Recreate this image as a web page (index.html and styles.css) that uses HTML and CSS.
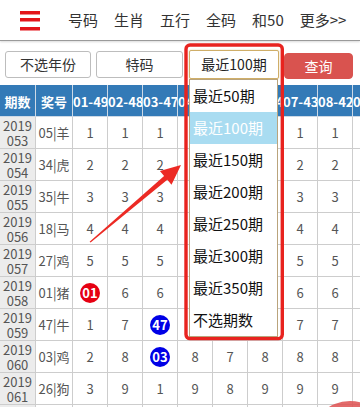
FILE: index.html
```html
<!DOCTYPE html>
<html lang="zh-CN">
<head>
<meta charset="utf-8">
<title>特码走势</title>
<link rel="stylesheet" href="styles.css">
</head>
<body>
<header class="topbar">
  <svg class="menu-icon" width="20" height="22" viewBox="0 0 20 22" aria-hidden="true">
    <rect x="0" y="0" width="20" height="3.5" fill="#e3151a"/>
    <rect x="0" y="7" width="20" height="3.5" fill="#e3151a"/>
    <rect x="0" y="16" width="20" height="3.5" fill="#e3151a"/>
  </svg>
  <nav class="nav">
    <a>号码</a><a>生肖</a><a>五行</a><a>全码</a><a>和50</a><a>更多&gt;&gt;</a>
  </nav>
</header>

<div class="filters">
  <button class="btn btn-year">不选年份</button>
  <button class="btn btn-type">特码</button>
  <div class="select-wrap">
    <div class="select">最近100期</div>
    <ul class="dropdown">
      <li>最近50期</li>
      <li class="active">最近100期</li>
      <li>最近150期</li>
      <li>最近200期</li>
      <li>最近250期</li>
      <li>最近300期</li>
      <li>最近350期</li>
      <li>不选期数</li>
    </ul>
  </div>
  <button class="btn btn-query">查询</button>
</div>

<div class="table-wrap">
  <table class="grid">
    <colgroup>
      <col class="c-issue"><col class="c-num">
      <col class="c"><col class="c"><col class="c"><col class="c"><col class="c"><col class="c"><col class="c"><col class="c"><col class="c"><col class="c">
    </colgroup>
    <thead>
      <tr><th>期数</th><th>奖号</th><th>01-49</th><th>02-48</th><th>03-47</th><th>04-46</th><th>05-45</th><th>06-44</th><th>07-43</th><th>08-42</th><th>09-41</th><th>10-40</th></tr>
    </thead>
    <tbody>
      <tr><td class="issue">2019<br>053</td><td>05|羊</td><td>1</td><td>1</td><td>1</td><td>1</td><td><span class="ball green">05</span></td><td>1</td><td>1</td><td>1</td><td>1</td><td>1</td></tr>
      <tr><td class="issue">2019<br>054</td><td>34|虎</td><td>2</td><td>2</td><td>2</td><td>2</td><td>1</td><td>2</td><td>2</td><td>2</td><td>2</td><td>2</td></tr>
      <tr><td class="issue">2019<br>055</td><td>35|牛</td><td>3</td><td>3</td><td>3</td><td>3</td><td>2</td><td>3</td><td>3</td><td>3</td><td>3</td><td>3</td></tr>
      <tr><td class="issue">2019<br>056</td><td>18|马</td><td>4</td><td>4</td><td>4</td><td>4</td><td>3</td><td>4</td><td>4</td><td>4</td><td>4</td><td>4</td></tr>
      <tr><td class="issue">2019<br>057</td><td>27|鸡</td><td>5</td><td>5</td><td>5</td><td>5</td><td>4</td><td>5</td><td>5</td><td>5</td><td>5</td><td>5</td></tr>
      <tr><td class="issue">2019<br>058</td><td>01|猪</td><td><span class="ball red">01</span></td><td>6</td><td>6</td><td>6</td><td>5</td><td>6</td><td>6</td><td>6</td><td>6</td><td>6</td></tr>
      <tr><td class="issue">2019<br>059</td><td>47|牛</td><td>1</td><td>7</td><td><span class="ball blue">47</span></td><td>7</td><td>6</td><td>7</td><td>7</td><td>7</td><td>7</td><td>7</td></tr>
      <tr><td class="issue">2019<br>060</td><td>03|鸡</td><td>2</td><td>8</td><td><span class="ball blue">03</span></td><td>8</td><td>7</td><td>8</td><td>8</td><td>8</td><td>8</td><td>8</td></tr>
      <tr><td class="issue">2019<br>061</td><td>26|狗</td><td>3</td><td>9</td><td>1</td><td>9</td><td>8</td><td>9</td><td>9</td><td>9</td><td>9</td><td>9</td></tr>
      <tr><td class="issue">2019<br>062</td><td>12|鼠</td><td>4</td><td>10</td><td>2</td><td>10</td><td>9</td><td>10</td><td>10</td><td>10</td><td>10</td><td>10</td></tr>
    </tbody>
  </table>
</div>

<svg class="annotation" width="360" height="407" viewBox="0 0 360 407" aria-hidden="true">
  <rect x="186" y="45" width="96.3" height="293.6" rx="4" ry="4" fill="none" stroke="#e8231f" stroke-width="3.4"/>
  <polygon points="89.6,241.8 164.1,176 159.9,171 181,165 171.5,184.8 167.3,179.8 90.6,242.6" fill="#ec2a24"/>
</svg>

<div class="fab"></div>
</body>
</html>
```

FILE: styles.css
```css
* {
  box-sizing: border-box;
}

html, body {
  margin: 0;
  padding: 0;
  background: #fff;
}

body {
  width: 360px;
  height: 407px;
  overflow: hidden;
  position: relative;
  font-family: "Noto Sans CJK SC", "Noto Sans", sans-serif;
  color: #333;
}

/* top navigation */
.topbar {
  height: 41px;
  display: flex;
  align-items: center;
  border-bottom: 1px solid #9a9a9a;
  box-shadow: 0 1px 2px rgba(0, 0, 0, 0.15);
  background: #fff;
}

.menu-icon {
  display: block;
  margin-left: 20px;
  margin-top: 4px;
  flex: none;
}

.nav {
  display: flex;
  gap: 16px;
  margin-left: 28px;
  font-size: 15px;
  line-height: 20px;
  color: #333;
}

.nav a {
  white-space: nowrap;
}

/* filter row */
.filters {
  display: flex;
  align-items: flex-start;
  gap: 5px;
  padding: 9px 0 6px 5px;
  height: 85px;
  height: auto;
}

.btn {
  font-family: inherit;
  font-size: 14px;
  color: #333;
  background: #fff;
  border: 1px solid #bdbdbd;
  border-radius: 3px;
  height: 27px;
  margin-top: 1px;
  padding: 0;
  line-height: 25px;
}

.btn-year {
  width: 86px;
}

.btn-type {
  width: 87px;
}

.btn-query {
  width: 69px;
  height: 26px;
  margin-top: 3px;
  background: #d9534f;
  border-color: #d9534f;
  border-radius: 4px;
  color: #fff;
}

.select-wrap {
  position: relative;
  width: 90px;
  margin-left: 1px;
}

.select {
  height: 29px;
  border: 1px solid #cfae68;
  border-radius: 2px;
  box-shadow: 0 0 2px rgba(207, 174, 104, 0.6);
  text-align: center;
  font-size: 14px;
  line-height: 27px;
  color: #222;
  background: #fff;
}

.dropdown {
  position: absolute;
  top: 29px;
  left: 0;
  width: 89px;
  margin: 0;
  padding: 0;
  list-style: none;
  background: #fff;
  border: 1px solid #baa47c;
  z-index: 5;
}

.dropdown li {
  height: 32px;
  line-height: 32px;
  padding-left: 3px;
  font-size: 15px;
  color: #111;
  white-space: nowrap;
}

.dropdown li.active {
  background: #a9dcf1;
  color: #fff;
}

/* table */
.table-wrap {
  width: 360px;
  overflow: hidden;
}

.grid {
  border-collapse: collapse;
  table-layout: fixed;
  width: 423px;
  margin-left: -1px;
}

.grid col.c-issue {
  width: 36px;
}

.grid col.c-num {
  width: 37px;
}

.grid col.c {
  width: 35px;
}

.grid th,
.grid td {
  border: 1px solid #cdcdcd;
  padding: 0;
  text-align: center;
  white-space: nowrap;
  overflow: hidden;
}

.grid th {
  height: 31px;
  background: #337ab7;
  color: #fff;
  font-size: 13px;
  font-weight: bold;
  border-color: #cdd9e6;
  border-top-color: #337ab7;
}

.grid td {
  height: 32px;
  font-size: 13px;
  color: #555;
  line-height: 15px;
}

.grid td.issue {
  background: #ececec;
  color: #555;
  font-size: 13px;
}

.ball {
  display: inline-block;
  width: 20px;
  height: 20px;
  border-radius: 50%;
  color: #fff;
  font-weight: bold;
  font-size: 13px;
  line-height: 20px;
  text-align: center;
}

.ball.red {
  background: #e60012;
}

.ball.blue {
  background: #0000e6;
}

.ball.green {
  background: #0a9a2a;
}

/* annotation overlay */
.annotation {
  position: absolute;
  left: 0;
  top: 0;
  z-index: 10;
  pointer-events: none;
}

.fab {
  position: absolute;
  left: 310px;
  top: 401px;
  width: 80px;
  height: 80px;
  border-radius: 50%;
  background: rgba(222, 80, 80, 0.85);
  z-index: 11;
}
```
